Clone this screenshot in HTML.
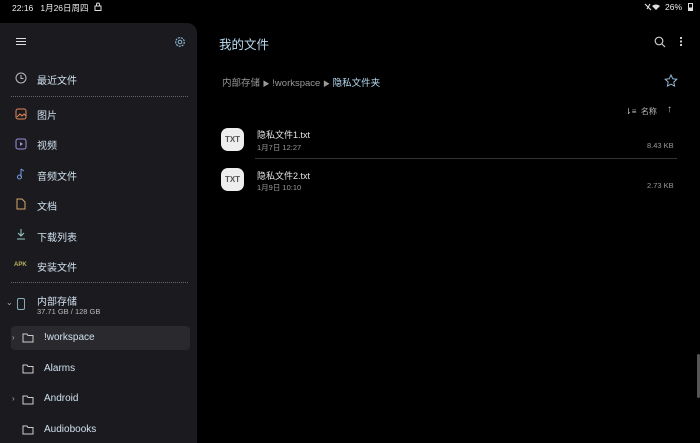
<!DOCTYPE html>
<html><head><meta charset="utf-8"><style>
*{margin:0;padding:0;box-sizing:border-box}
body{width:700px;height:438px;background:#000;overflow:hidden;position:relative;font-family:"Liberation Sans","Noto Sans CJK SC",sans-serif;color:#dfe3e8}
.a{position:absolute;white-space:nowrap}
#side{position:absolute;left:0;top:23px;width:197px;height:420px;background:#1b1b1f;border-radius:0 10px 0 0}
.lbl{font-size:10px;color:#cfe0ee}
.dash{position:absolute;left:11px;width:177px;border-top:1px dotted #666}
svg{position:absolute}
</style></head><body>
<div class="a" style="left:12px;top:2px;font-size:8.5px;color:#eee">22:16&nbsp;&nbsp; 1月26日周四</div>
<svg style="left:94px;top:2px" width="8" height="9" viewBox="0 0 8 9"><rect x="1" y="4" width="6" height="4.5" fill="none" stroke="#ddd"/><path d="M2.5 4V2.5a1.5 1.5 0 0 1 3 0V4" fill="none" stroke="#ddd"/></svg>
<div class="a" style="left:665px;top:2px;font-size:8.5px;color:#eee">26%</div>
<svg style="left:644px;top:2px" width="20" height="9"><path d="M1 2l6 6M3 7l3-5" stroke="#ddd" stroke-width="1.2"/><path d="M12 8l-4-4a6 6 0 0 1 8 0z" fill="#ddd"/></svg>
<div class="a" style="left:688px;top:3px;width:5px;height:8px;border:1px solid #ddd;background:linear-gradient(#0000 60%,#ddd 60%)"></div>

<div id="side"></div>
<div class="a" style="left:16px;top:38px;width:10px;height:1px;background:#ddd;box-shadow:0 3px #ddd,0 6px #ddd"></div>
<svg style="left:174px;top:36px" width="12" height="12" viewBox="0 0 12 12"><circle cx="6" cy="6" r="4.3" fill="none" stroke="#8fb6d4" stroke-width="1.2" stroke-dasharray="2 1"/><circle cx="6" cy="6" r="1.8" fill="none" stroke="#8fb6d4"/></svg>

<svg style="left:15px;top:72px" width="12" height="12"><circle cx="6" cy="6" r="5" fill="none" stroke="#bbb"/><path d="M6 3v3.5h2.5" fill="none" stroke="#bbb"/></svg>
<div class="a lbl" style="left:37px;top:72px">最近文件</div>
<div class="dash" style="top:96px"></div>
<svg style="left:15px;top:108px" width="12" height="12"><rect x="1" y="1" width="10" height="10" rx="2" fill="none" stroke="#e08a5a"/><path d="M2 9l3-3 2 2 2-2 2 2" fill="none" stroke="#e08a5a"/></svg>
<div class="a lbl" style="left:37px;top:107px">图片</div>
<svg style="left:15px;top:138px" width="12" height="12"><rect x="1" y="1" width="10" height="10" rx="2" fill="none" stroke="#a08ee0"/><path d="M5 4v4l3-2z" fill="#a08ee0"/></svg>
<div class="a lbl" style="left:37px;top:137px">视频</div>
<svg style="left:15px;top:168px" width="12" height="12"><path d="M6 1v8" stroke="#7a9ae8"/><circle cx="4.5" cy="9" r="2" fill="none" stroke="#7a9ae8"/><path d="M6 1l3 2" stroke="#7a9ae8"/></svg>
<div class="a lbl" style="left:37px;top:168px">音频文件</div>
<svg style="left:15px;top:198px" width="12" height="12"><path d="M2 1h5l3 3v7H2z" fill="none" stroke="#d6a66a"/></svg>
<div class="a lbl" style="left:37px;top:198px">文档</div>
<svg style="left:15px;top:228px" width="12" height="12"><path d="M6 1v7M3 5l3 3 3-3M2 11h8" fill="none" stroke="#9cc"/></svg>
<div class="a lbl" style="left:37px;top:229px">下载列表</div>
<div class="a" style="left:14px;top:262px;font-size:6px;font-weight:bold;color:#b8b060">APK</div>
<div class="a lbl" style="left:37px;top:259px">安装文件</div>
<div class="dash" style="top:282px"></div>
<div class="a" style="left:6px;top:298px;font-size:8px;color:#aaa">⌄</div>
<div class="a" style="left:17px;top:298px;width:8px;height:12px;border:1px solid #8ab;border-radius:2px"></div>
<div class="a lbl" style="left:37px;top:293px">内部存储</div>
<div class="a" style="left:37px;top:307px;font-size:7.5px;color:#bbb">37.71 GB / 128 GB</div>
<div class="a" style="left:11px;top:326px;width:179px;height:24px;background:#2a2a2e;border-radius:4px"></div>
<div class="a" style="left:12px;top:333px;font-size:8px;color:#aaa">›</div>
<div class="a" style="left:12px;top:394px;font-size:8px;color:#aaa">›</div>
<svg style="left:22px;top:333px" width="12" height="10"><path d="M1 1h4l1 1.5h5v6.5H1z" fill="none" stroke="#ccc"/></svg>
<svg style="left:22px;top:364px" width="12" height="10"><path d="M1 1h4l1 1.5h5v6.5H1z" fill="none" stroke="#ccc"/></svg>
<svg style="left:22px;top:395px" width="12" height="10"><path d="M1 1h4l1 1.5h5v6.5H1z" fill="none" stroke="#ccc"/></svg>
<svg style="left:22px;top:425px" width="12" height="10"><path d="M1 1h4l1 1.5h5v6.5H1z" fill="none" stroke="#ccc"/></svg>
<div class="a lbl" style="left:44px;top:332px">!workspace</div>
<div class="a lbl" style="left:44px;top:363px">Alarms</div>
<div class="a lbl" style="left:44px;top:393px">Android</div>
<div class="a lbl" style="left:44px;top:424px">Audiobooks</div>

<div class="a" style="left:219px;top:34px;font-size:12.5px;color:#b9dcf2">我的文件</div>
<svg style="left:654px;top:36px" width="12" height="12"><circle cx="5" cy="5" r="3.8" fill="none" stroke="#ccc" stroke-width="1.2"/><path d="M8 8l3 3" stroke="#ccc" stroke-width="1.2"/></svg>
<div class="a" style="left:680px;top:37px;width:2px;height:2px;background:#ccc;box-shadow:0 3.5px #ccc,0 7px #ccc"></div>
<div class="a" style="left:222px;top:75px;font-size:9.5px;color:#999">内部存储 <span style="font-size:7px">▶</span> !workspace <span style="font-size:7px">▶</span> <span style="color:#b9dcf2">隐私文件夹</span></div>
<svg style="left:664px;top:74px" width="14" height="14" viewBox="0 0 14 14"><path d="M7 1l1.8 3.8 4 .5-3 2.8.8 4L7 10.2 3.4 12.1l.8-4-3-2.8 4-.5z" fill="none" stroke="#8fb6d4"/></svg>
<div class="a" style="left:625px;top:106px;font-size:8px;color:#bbb">⇂≡&nbsp; 名称</div>
<div class="a" style="left:667px;top:104px;font-size:10px;color:#bbb">↑</div>

<div class="a" style="left:221px;top:128px;width:23px;height:23px;border-radius:7px;background:#eee;color:#555;font-size:8px;font-weight:bold;text-align:center;line-height:23px">TXT</div>
<div class="a" style="left:257px;top:128px;font-size:9px;color:#e6e6e6">隐私文件1.txt</div>
<div class="a" style="left:257px;top:142px;font-size:7.5px;color:#999">1月7日 12:27</div>
<div class="a" style="left:647px;top:141px;font-size:7.5px;color:#999">8.43 KB</div>
<div class="a" style="left:255px;top:158px;width:422px;height:1px;background:#333"></div>
<div class="a" style="left:221px;top:168px;width:23px;height:23px;border-radius:7px;background:#eee;color:#555;font-size:8px;font-weight:bold;text-align:center;line-height:23px">TXT</div>
<div class="a" style="left:257px;top:169px;font-size:9px;color:#e6e6e6">隐私文件2.txt</div>
<div class="a" style="left:257px;top:182px;font-size:7.5px;color:#999">1月9日 10:10</div>
<div class="a" style="left:647px;top:181px;font-size:7.5px;color:#999">2.73 KB</div>
<div class="a" style="left:697px;top:354px;width:3px;height:44px;background:#555;border-radius:2px"></div>
</body></html>
